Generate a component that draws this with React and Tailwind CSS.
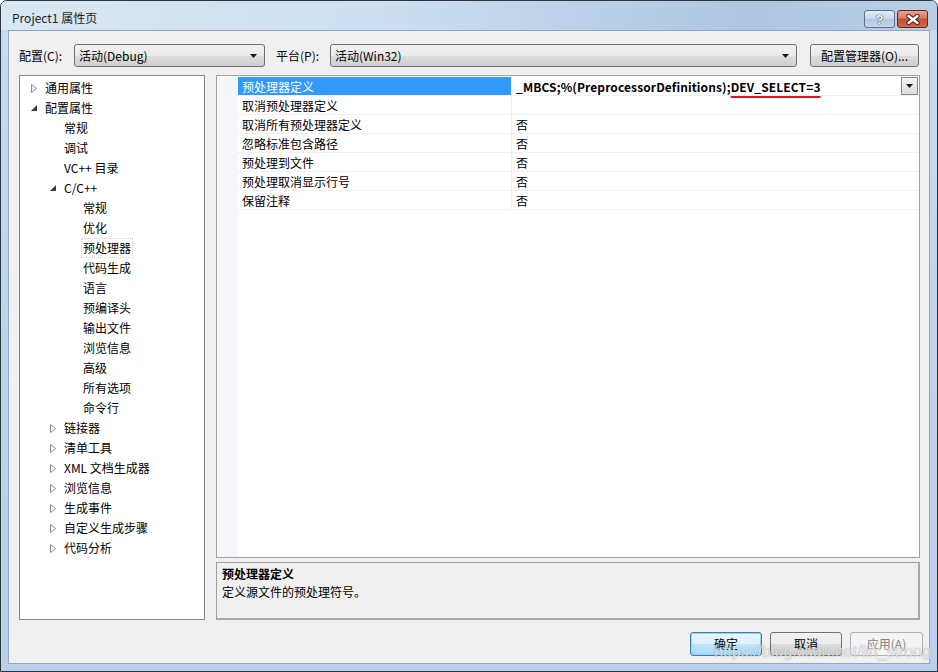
import React from 'react';

const tree = [
  { label: '通用属性', level: 0, arrow: 'closed' },
  { label: '配置属性', level: 0, arrow: 'open' },
  { label: '常规', level: 1 },
  { label: '调试', level: 1 },
  { label: 'VC++ 目录', level: 1 },
  { label: 'C/C++', level: 1, arrow: 'open' },
  { label: '常规', level: 2 },
  { label: '优化', level: 2 },
  { label: '预处理器', level: 2, selected: true },
  { label: '代码生成', level: 2 },
  { label: '语言', level: 2 },
  { label: '预编译头', level: 2 },
  { label: '输出文件', level: 2 },
  { label: '浏览信息', level: 2 },
  { label: '高级', level: 2 },
  { label: '所有选项', level: 2 },
  { label: '命令行', level: 2 },
  { label: '链接器', level: 1, arrow: 'closed' },
  { label: '清单工具', level: 1, arrow: 'closed' },
  { label: 'XML 文档生成器', level: 1, arrow: 'closed' },
  { label: '浏览信息', level: 1, arrow: 'closed' },
  { label: '生成事件', level: 1, arrow: 'closed' },
  { label: '自定义生成步骤', level: 1, arrow: 'closed' },
  { label: '代码分析', level: 1, arrow: 'closed' },
];

const props = [
  ['取消预处理器定义', ''],
  ['取消所有预处理器定义', '否'],
  ['忽略标准包含路径', '否'],
  ['预处理到文件', '否'],
  ['预处理取消显示行号', '否'],
  ['保留注释', '否'],
];

const indent = { 0: 'pl-[11px]', 1: 'pl-[30px]', 2: 'pl-[49px]' };

const ClosedArrow = () => (
  <svg width="6" height="9" viewBox="0 0 6 9">
    <path d="M0.5 0.5 L5.5 4.5 L0.5 8.5 Z" fill="white" stroke="#8a8a8a" strokeWidth="1" />
  </svg>
);

const OpenArrow = () => (
  <svg width="6" height="6" viewBox="0 0 6 6">
    <path d="M6 0 L6 6 L0 6 Z" fill="#3c3c3c" />
  </svg>
);

const DownTriangle = () => (
  <svg width="7" height="4" viewBox="0 0 7 4">
    <path d="M0 0 H7 L3.5 4 Z" fill="#1a1a1a" />
  </svg>
);

const Combo = ({ text, className }) => (
  <div className={`h-[23px] flex items-center justify-between pl-[4px] pr-[7px] rounded-[3px] border border-[#707070] bg-[linear-gradient(#f2f2f2_0%,#ebebeb_50%,#dddddd_51%,#cfcfcf_100%)] ${className}`}>
    <span>{text}</span>
    <DownTriangle />
  </div>
);

const App = () => {
  return (
    <div className="relative w-[938px] h-[672px] overflow-hidden bg-white font-['Noto_Sans_CJK_SC','Noto_Sans',sans-serif] text-[12px] text-black">
      <div className="w-[938px] h-[672px] flex flex-col border border-[#2c3540] rounded-t-[7px] bg-[linear-gradient(#c9dbef,#bcd3eb_60%,#b9d1ea)]">
        {/* title bar */}
        <div className="h-[29px] flex items-start justify-between pl-[11px] pr-[9px] bg-[linear-gradient(90deg,#dae7f4,#cddff1_40%,#adc6e1_80%,#b9cfe7)] rounded-t-[6px]">
          <span className="mt-[8px] text-[12px] text-[#1e1e1e]">Project1 属性页</span>
          <div className="flex mt-[9px] gap-[2px]">
            <div className="w-[31px] h-[18px] rounded-[3px] border border-[#5d6f88] bg-[linear-gradient(#e3ecf6,#c6d6ea_50%,#b0c6e0_51%,#c5d7ec)] flex items-center justify-center">
              <span className="font-['Liberation_Sans',sans-serif] font-bold text-[13px] leading-none text-white [text-shadow:0_0_1px_#1f2c3e,0_0_1px_#1f2c3e]">?</span>
            </div>
            <div className="w-[31px] h-[18px] rounded-[3px] border border-[#6e2119] bg-[linear-gradient(#e8a394,#d47a68_45%,#c44a33_50%,#d06a4e)] flex items-center justify-center">
              <svg width="14" height="11" viewBox="0 0 14 11">
                <path d="M2.5 2 L11.5 9 M11.5 2 L2.5 9" stroke="#4a1610" strokeWidth="4.2" strokeLinecap="round" />
                <path d="M2.5 2 L11.5 9 M11.5 2 L2.5 9" stroke="white" strokeWidth="2.4" strokeLinecap="round" />
              </svg>
            </div>
          </div>
        </div>

        {/* client area */}
        <div className="mx-[7px] w-[922px] h-[634px] border border-[#8fa7c3] bg-[#f0f0f0] flex flex-col pt-[13px] pl-[10px]">
          <div className="flex items-center h-[23px]">
            <span className="w-[55px]">配置(C):</span>
            <Combo text="活动(Debug)" className="w-[191px]" />
            <span className="w-[54px] ml-[11px]">平台(P):</span>
            <Combo text="活动(Win32)" className="w-[467px]" />
            <div className="ml-[13px] w-[109px] h-[23px] rounded-[3px] border border-[#707070] bg-[linear-gradient(#f2f2f2_0%,#ebebeb_50%,#dddddd_51%,#cfcfcf_100%)] flex items-center justify-center">
              配置管理器(O)...
            </div>
          </div>

          <div className="flex mt-[8px] h-[545px]">
            {/* tree */}
            <div className="w-[186px] h-[545px] border border-[#828790] bg-white pt-[2px]">
              {tree.map((item, i) => (
                <div key={i} className={`h-[20px] flex items-center ${indent[item.level]}`}>
                  <span className="w-[14px] flex items-center">
                    {item.arrow === 'closed' && <ClosedArrow />}
                    {item.arrow === 'open' && <OpenArrow />}
                  </span>
                  <span className={item.selected ? 'px-[1px] -ml-[1px] outline outline-1 outline-dotted outline-[#d6d6d6]' : ''}>{item.label}</span>
                </div>
              ))}
            </div>

            {/* right column */}
            <div className="ml-[11px] w-[704px] flex flex-col">
              <div className="h-[483px] border border-[#a0a0a0] bg-white flex pt-[1px]">
                <div className="w-[21px] bg-[#f5f7fb]" />
                <div className="flex-1 flex flex-col">
                  <div className="h-[19px] flex border-b border-[#edf1f7]">
                    <div className="w-[273px] bg-[#3399ff] text-white pl-[4px] pt-[1px] leading-[18px]">预处理器定义</div>
                    <div className="flex-1 flex items-center justify-between border-l border-[#edf1f7] pl-[4px] pr-[1px]">
                      <span className="font-bold leading-[18px] pt-[1px] tracking-[0.1px]">
                        _MBCS;%(PreprocessorDefinitions);
                        <span className="underline decoration-[#e3121b] decoration-2 underline-offset-[4px]">DEV_SELECT=3</span>
                      </span>
                      <div className="w-[17px] h-[18px] border border-[#8a8a8a] bg-[linear-gradient(#f4f4f4,#dcdcdc)] flex items-center justify-center">
                        <DownTriangle />
                      </div>
                    </div>
                  </div>
                  {props.map(([name, value], i) => (
                    <div key={i} className="h-[19px] flex border-b border-[#edf1f7]">
                      <div className="w-[273px] pl-[4px] pt-[1px] leading-[18px]">{name}</div>
                      <div className="flex-1 border-l border-[#edf1f7] pl-[4px] pt-[1px] leading-[18px]">{value}</div>
                    </div>
                  ))}
                </div>
              </div>

              <div className="mt-[4px] h-[58px] border border-[#a0a0a0] border-r-2 border-b-2 border-r-[#a8a8a8] border-b-[#a8a8a8] bg-[#f0f0f0] pl-[5px] pt-[2px]">
                <div className="font-bold leading-[18px]">预处理器定义</div>
                <div className="leading-[18px]">定义源文件的预处理符号。</div>
              </div>
            </div>
          </div>

          <div className="flex justify-end gap-[8px] mt-[12px] pr-[6px]">
            <div className="w-[72px] h-[24px] rounded-[3px] border border-[#3c7fb1] bg-[linear-gradient(#eaf6fd_0%,#d9f0fc_50%,#bee6fd_51%,#a7d9f5_100%)] shadow-[inset_0_0_0_1px_#9bd0ee] flex items-center justify-center">确定</div>
            <div className="w-[72px] h-[24px] rounded-[3px] border border-[#707070] bg-[linear-gradient(#f2f2f2_0%,#ebebeb_50%,#dddddd_51%,#cfcfcf_100%)] flex items-center justify-center">取消</div>
            <div className="w-[73px] h-[24px] rounded-[3px] border border-[#adb2b5] bg-[#f4f4f4] text-[#838383] flex items-center justify-center">应用(A)</div>
          </div>
        </div>
      </div>

      <span className="absolute left-[714px] top-[640px] text-[16px] font-['Liberation_Sans',sans-serif] text-white/70 [text-shadow:0_0_1px_rgba(90,90,90,0.6)] whitespace-nowrap">
        https://blog.csdn.net/lin_strong
      </span>
    </div>
  );
};

export default App;
